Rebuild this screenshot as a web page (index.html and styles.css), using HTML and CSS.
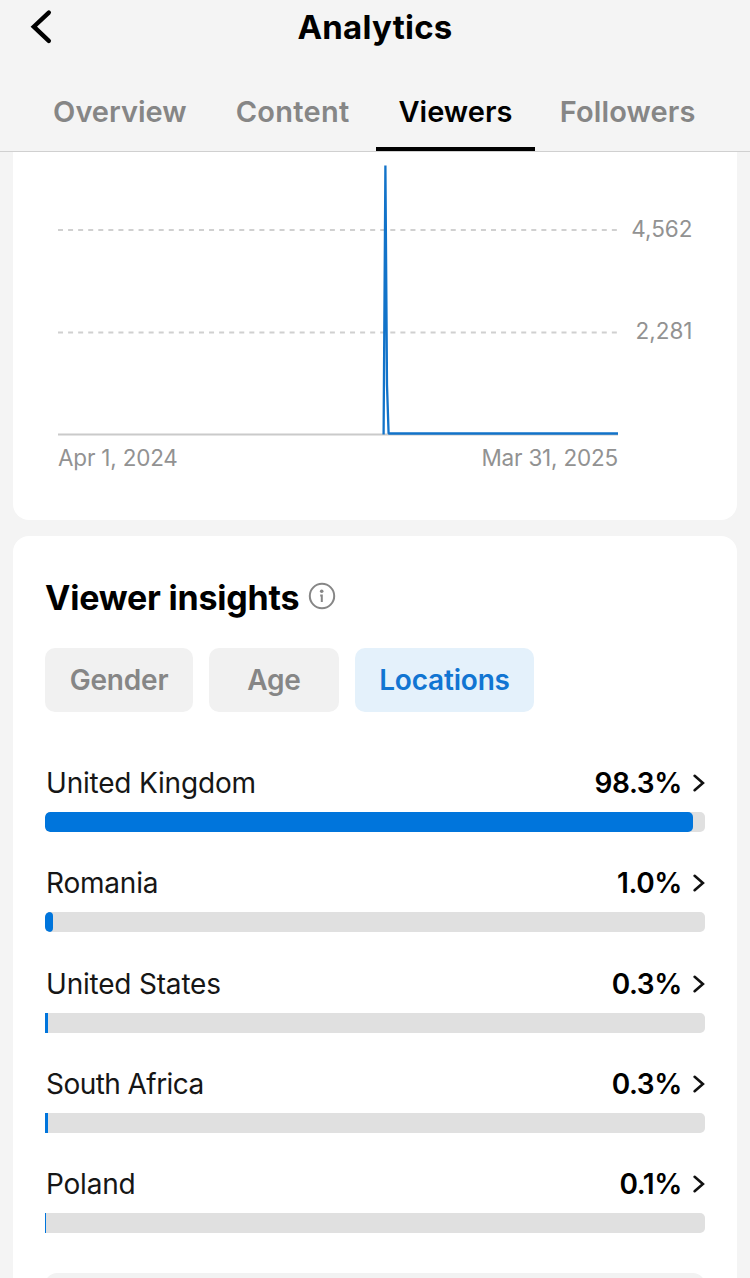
FILE: index.html
```
<!DOCTYPE html>
<html lang="en">
<head>
    <meta charset="utf-8" />
    <title>Analytics</title>
    <link rel="stylesheet" href="styles.css">
</head>
<body>
<div class="app">
    <div class="header">
        <div class="title-bar">
            <svg class="back" width="24" height="36" viewBox="0 0 24 36"><path d="M19.8 3.6 L4.8 17.7 L19.8 31.9"/></svg>
            <h1>Analytics</h1>
        </div>
        <div class="tabs">
            <div class="tab overview">Overview</div>
            <div class="tab content">Content</div>
            <div class="tab viewers active">Viewers</div>
            <div class="tab followers">Followers</div>
        </div>
    </div>
    <div class="card chart-card">
        <svg class="chart" width="724" height="368" viewBox="13 152 724 368">
            <path class="grid" d="M58 230 H618 M58 332.5 H618"/>
            <path class="axis" d="M58 434.5 H618"/>
            <path class="line" d="M383.6 434.5 L385.4 165.5 L387 385 L388.6 433.5 H618"/>
            <text class="scale" x="692.5" y="236.5" text-anchor="end">4,562</text>
            <text class="scale" x="692.5" y="339" text-anchor="end">2,281</text>
            <text x="58" y="465.5">Apr 1, 2024</text>
            <text x="618" y="465.5" text-anchor="end">Mar 31, 2025</text>
        </svg>
    </div>
    <div class="card insights">
        <div class="insights-title">
            <h2>Viewer insights</h2>
            <svg class="info" width="28" height="28" viewBox="0 0 28 28">
                <circle class="ring" cx="14" cy="14" r="12.2"/>
                <circle class="dot" cx="13.7" cy="9.2" r="1.8"/>
                <path d="M12.2 13.4 H13.8 V20"/>
            </svg>
        </div>
        <div class="chips">
            <div class="chip gender">Gender</div>
            <div class="chip age">Age</div>
            <div class="chip locations selected">Locations</div>
        </div>
        <div class="rows">
            <div class="row">
                <div class="row-head">
                    <span class="name">United Kingdom</span>
                    <span class="value">98.3%</span>
                    <svg class="arrow" width="13" height="20" viewBox="0 0 13 20"><path d="M2.6 2.8 L10.9 10 L2.6 17.2"/></svg>
                </div>
                <div class="bar"><div class="fill" style="width: 98.2%"></div></div>
            </div>
            <div class="row">
                <div class="row-head">
                    <span class="name">Romania</span>
                    <span class="value">1.0%</span>
                    <svg class="arrow" width="13" height="20" viewBox="0 0 13 20"><path d="M2.6 2.8 L10.9 10 L2.6 17.2"/></svg>
                </div>
                <div class="bar"><div class="fill" style="width: 1.2%"></div></div>
            </div>
            <div class="row">
                <div class="row-head">
                    <span class="name">United States</span>
                    <span class="value">0.3%</span>
                    <svg class="arrow" width="13" height="20" viewBox="0 0 13 20"><path d="M2.6 2.8 L10.9 10 L2.6 17.2"/></svg>
                </div>
                <div class="bar flat"><div class="fill" style="width: 0.45%"></div></div>
            </div>
            <div class="row">
                <div class="row-head">
                    <span class="name south-africa">South Africa</span>
                    <span class="value">0.3%</span>
                    <svg class="arrow" width="13" height="20" viewBox="0 0 13 20"><path d="M2.6 2.8 L10.9 10 L2.6 17.2"/></svg>
                </div>
                <div class="bar flat"><div class="fill" style="width: 0.45%"></div></div>
            </div>
            <div class="row">
                <div class="row-head">
                    <span class="name">Poland</span>
                    <span class="value">0.1%</span>
                    <svg class="arrow" width="13" height="20" viewBox="0 0 13 20"><path d="M2.6 2.8 L10.9 10 L2.6 17.2"/></svg>
                </div>
                <div class="bar flat"><div class="fill" style="width: 0.15%"></div></div>
            </div>
        </div>
        <div class="more"></div>
    </div>
</div>
</body>
</html>
```

FILE: styles.css
```
*{
    box-sizing: border-box;
}
body{
    margin: 0px;
    background: #f4f4f4;
    color: #000;
    font-family: Inter, "Liberation Sans", sans-serif;
}
h1, h2{
    margin: 0px;
}
.app{
    width: 750px;
    height: 1278px;
    overflow: hidden;
}

/* header */
.header{
    height: 152px;
    border-bottom: 1px solid #d0d0d0;
}
.title-bar{
    display: grid;
    grid-template-columns: 80px 1fr 80px;
    align-items: center;
    height: 54px;
}
.back{
    margin-left: 29px;
}
.back path{
    fill: none;
    stroke: #000;
    stroke-width: 4.4;
    stroke-linecap: round;
}
h1{
    text-align: center;
    font-size: 33px;
    line-height: 54px;
    font-weight: 700;
    letter-spacing: 0.25px;
}
.tabs{
    display: flex;
    height: 97px;
    padding: 0 30px;
}
.tab{
    padding-top: 38px;
    text-align: center;
    font-size: 29px;
    line-height: 40px;
    font-weight: 600;
    color: #868686;
    white-space: nowrap;
}
.overview{
    width: 180px;
}
.content{
    width: 166px;
    letter-spacing: 0.3px;
}
.viewers{
    width: 160px;
}
.followers{
    width: 185px;
    letter-spacing: 0.1px;
}
.tab.active{
    color: #000;
    border-bottom: 4px solid #000;
}

/* cards */
.card{
    width: 724px;
    margin: 0 auto;
    background: #fff;
    border-radius: 16px;
}
.chart-card{
    height: 368px;
    margin-bottom: 16px;
    border-radius: 0 0 16px 16px;
}
.chart{
    display: block;
}
.chart text{
    font-size: 22.5px;
    letter-spacing: -0.2px;
    fill: #929292;
}
.chart .scale{
    letter-spacing: 0px;
}
.grid{
    stroke: #d0d0d0;
    stroke-width: 1.9;
    stroke-dasharray: 5 5.07;
}
.axis{
    stroke: #cacaca;
    stroke-width: 2;
}
.line{
    fill: none;
    stroke: #1273c9;
    stroke-width: 2.3;
    stroke-linejoin: bevel;
}
.insights{
    height: 760px;
    padding: 40px 32px 0;
}
.insights-title{
    display: flex;
    gap: 9px;
    height: 44px;
}
h2{
    font-size: 34px;
    line-height: 44px;
    font-weight: 700;
    letter-spacing: -0.22px;
}
.info{
    margin-top: 6px;
}
.info .ring, .info path{
    fill: none;
    stroke: #868686;
    stroke-width: 2;
}
.info .dot{
    fill: #868686;
}
.chips{
    display: flex;
    gap: 16px;
    margin-top: 28px;
}
.chip{
    height: 64px;
    border-radius: 10px;
    background: #f1f1f1;
    color: #868686;
    text-align: center;
    font-size: 28px;
    line-height: 65px;
    font-weight: 600;
    letter-spacing: -0.2px;
}
.gender{
    width: 148px;
}
.age{
    width: 130px;
}
.locations{
    width: 179px;
}
.chip.selected{
    background: #e4f1fb;
    color: #1175d2;
}

/* locations list */
.rows{
    margin-top: 54px;
}
.row{
    height: 100.25px;
}
.row-head{
    display: flex;
    align-items: center;
    height: 34px;
    margin-bottom: 12px;
    font-size: 28px;
}
.name{
    flex: 1;
    padding-left: 1px;
    letter-spacing: -0.2px;
    color: #161616;
}
.south-africa{
    letter-spacing: -0.55px;
}
.value{
    font-weight: 600;
    letter-spacing: -0.4px;
    margin-right: 10px;
}
.arrow path{
    fill: none;
    stroke: #111;
    stroke-width: 2.6;
    stroke-linecap: round;
}
.bar{
    height: 20px;
    border-radius: 5px;
    background: #e0e0e0;
    overflow: hidden;
}
.fill{
    height: 20px;
    border-radius: 5px;
    background: #0075dc;
}
/* tiny shares: square left end so the sliver stays visible */
.bar.flat{
    border-radius: 0 5px 5px 0;
}
.flat .fill{
    min-width: 1.4px;
    border-radius: 0;
}
.more{
    height: 80px;
    margin-top: 6px;
    border-radius: 12px;
    background: #f2f2f2;
}
```
